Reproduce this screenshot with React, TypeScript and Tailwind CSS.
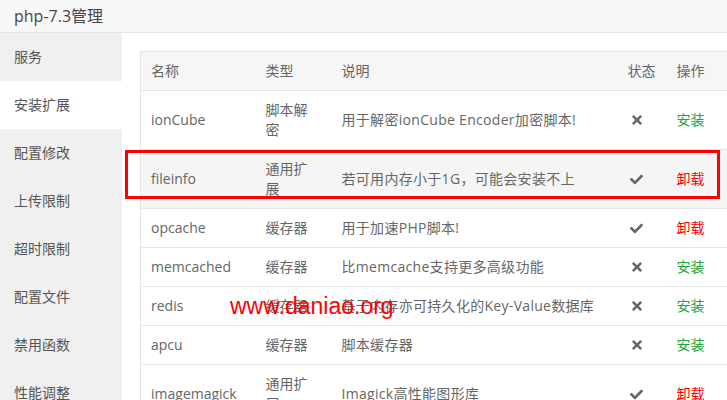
import { FaCheck, FaTimes } from "react-icons/fa"

const menu = ["服务", "安装扩展", "配置修改", "上传限制", "超时限制", "配置文件", "禁用函数", "性能调整"]

type Ext = { name: string; type: string; desc: string; on: boolean }

const exts: Ext[] = [
  { name: "ionCube", type: "脚本解密", desc: "用于解密ionCube Encoder加密脚本!", on: false },
  { name: "fileinfo", type: "通用扩展", desc: "若可用内存小于1G，可能会安装不上", on: true },
  { name: "opcache", type: "缓存器", desc: "用于加速PHP脚本!", on: true },
  { name: "memcached", type: "缓存器", desc: "比memcache支持更多高级功能", on: false },
  { name: "redis", type: "缓存器", desc: "基于内存亦可持久化的Key-Value数据库", on: false },
  { name: "apcu", type: "缓存器", desc: "脚本缓存器", on: false },
  { name: "imagemagick", type: "通用扩展", desc: "Imagick高性能图形库", on: true },
]

export default function App() {
  return (
    <div
      className="relative h-[400px] w-[727px] overflow-hidden bg-white text-[14px] leading-[20px] text-[#666]"
      style={{ fontFamily: '"Open Sans", "Noto Sans CJK SC", sans-serif' }}
    >
      <div className="flex h-[33px] items-center border-b border-[#e6e6e6] bg-[#f8f8f8] pl-[14px] text-[16px] text-[#444]">
        php-7.3管理
      </div>
      <div className="flex">
        <div className="w-[122px] shrink-0 bg-[#f0f0f0]">
          {menu.map((m, i) => (
            <div
              key={m}
              className={
                i === 1
                  ? "flex h-[48px] items-center bg-white pl-[14px] text-[#555]"
                  : "flex h-[48px] items-center pl-[14px] text-[#555]"
              }
            >
              {m}
            </div>
          ))}
        </div>
        <div className="pl-[18px] pt-[18px]">
          <table className="w-[600px] table-fixed border-collapse border border-[#e5e5e5]">
            <colgroup>
              <col className="w-[115px]" />
              <col className="w-[76px]" />
              <col className="w-[286px]" />
              <col className="w-[49px]" />
              <col className="w-[74px]" />
            </colgroup>
            <thead>
              <tr className="h-[39px] bg-[#f6f6f6] text-left">
                <th className="px-[10px] font-normal">名称</th>
                <th className="px-[10px] font-normal">类型</th>
                <th className="px-[10px] font-normal">说明</th>
                <th className="px-[10px] font-normal">状态</th>
                <th className="px-[10px] font-normal">操作</th>
              </tr>
            </thead>
            <tbody>
              {exts.map((e) => (
                <tr
                  key={e.name}
                  className={
                    e.name === "fileinfo"
                      ? "border-t border-[#e5e5e5] bg-[#f5f5f5]"
                      : "border-t border-[#e5e5e5]"
                  }
                >
                  <td className="px-[10px] py-[9px]">{e.name}</td>
                  <td className="px-[10px] py-[9px]">
                    <div className="w-[45px]">{e.type}</div>
                  </td>
                  <td className="px-[10px] py-[9px] whitespace-nowrap tracking-[0.3px]">{e.desc}</td>
                  <td className="px-[10px] py-[9px]">
                    {e.on ? (
                      <FaCheck className="ml-[2px] h-[13px] w-[13px] text-[#666]" />
                    ) : (
                      <FaTimes className="ml-[2px] h-[14px] w-[14px] text-[#666]" />
                    )}
                  </td>
                  <td className="px-[10px] py-[9px]">
                    {e.on ? (
                      <span className="text-[#ff0000]">卸载</span>
                    ) : (
                      <span className="text-[#20a53a]">安装</span>
                    )}
                  </td>
                </tr>
              ))}
            </tbody>
          </table>
        </div>
      </div>

      <div className="absolute left-[125px] top-[150px] h-[49px] w-[595px] border-[3px] border-[#ff0000]" />
      <div
        className="absolute left-[230px] top-[292px] text-[23px] leading-[28px] text-[#ff0000]"
        style={{ fontFamily: '"Liberation Sans", Arial, sans-serif' }}
      >
        www.daniao.org
      </div>
    </div>
  )
}
